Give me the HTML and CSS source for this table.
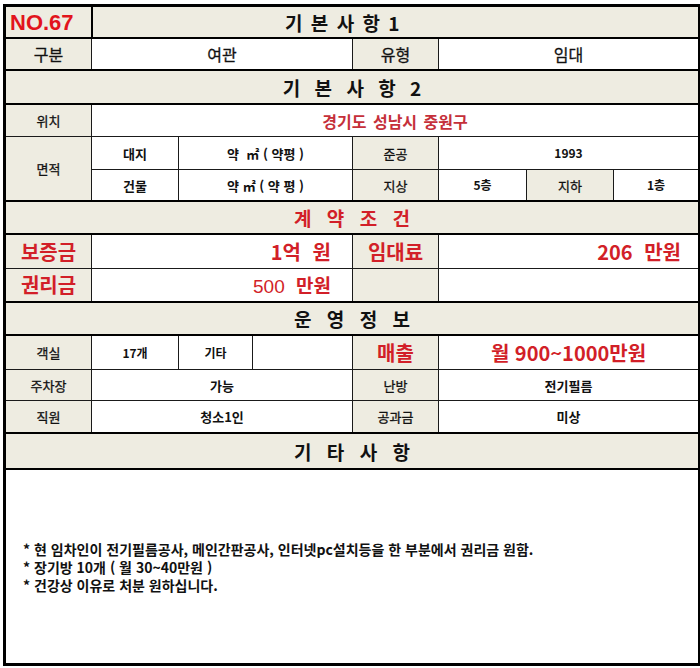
FILE: index.html
```html
<!DOCTYPE html>
<html lang="ko">
<head>
<meta charset="utf-8">
<title>NO.67</title>
<link rel="stylesheet" href="styles.css">
</head>
<body>
<table class="sheet">
  <colgroup>
    <col class="c1"><col class="c2"><col class="c3"><col class="c4">
    <col class="c5"><col class="c6"><col class="c7"><col class="c8">
  </colgroup>
  <tbody class="sec">
    <tr class="first">
      <td class="no">NO.67</td>
      <td colspan="7" class="head h1">기 본 사 항 1</td>
    </tr>
  </tbody>
  <tbody class="sec">
    <tr class="short">
      <td class="lab l16">구분</td>
      <td colspan="3" class="val v16">여관</td>
      <td class="lab l16">유형</td>
      <td colspan="3" class="val v16">임대</td>
    </tr>
  </tbody>
  <tbody class="sec">
    <tr class="tall"><td colspan="8" class="head h2">기 본 사 항 2</td></tr>
  </tbody>
  <tbody class="sec">
    <tr>
      <td class="lab">위치</td>
      <td colspan="7" class="val addr">경기도 성남시 중원구</td>
    </tr>
    <tr class="tall">
      <td rowspan="2" class="lab">면적</td>
      <td class="val b">대지</td>
      <td colspan="2" class="val b">약&nbsp; ㎡ ( 약평 )</td>
      <td class="lab">준공</td>
      <td colspan="3" class="val b sm">1993</td>
    </tr>
    <tr class="short">
      <td class="val b">건물</td>
      <td colspan="2" class="val b">약 ㎡ ( 약 평 )</td>
      <td class="lab">지상</td>
      <td class="val b sm">5층</td>
      <td class="lab">지하</td>
      <td class="val b sm">1층</td>
    </tr>
  </tbody>
  <tbody class="sec">
    <tr><td colspan="8" class="head h3 red">계 약 조 건</td></tr>
  </tbody>
  <tbody class="sec">
    <tr class="xtall">
      <td class="lab big red">보증금</td>
      <td colspan="3" class="val big red right">1억 원</td>
      <td class="lab big red">임대료</td>
      <td colspan="3" class="val big red right r2">206 만원</td>
    </tr>
    <tr class="tall">
      <td class="lab big red">권리금</td>
      <td colspan="3" class="val mid red right"><span class="arial">500</span> 만원</td>
      <td class="lab"></td>
      <td colspan="3" class="val"></td>
    </tr>
  </tbody>
  <tbody class="sec">
    <tr><td colspan="8" class="head h3">운 영 정 보</td></tr>
  </tbody>
  <tbody class="sec">
    <tr class="xtall">
      <td class="lab">객실</td>
      <td class="val b sm">17개</td>
      <td class="val b sm">기타</td>
      <td class="val"></td>
      <td class="lab big red">매출</td>
      <td colspan="3" class="val big red">월 900~1000만원</td>
    </tr>
    <tr class="short">
      <td class="lab">주차장</td>
      <td colspan="3" class="val b">가능</td>
      <td class="lab">난방</td>
      <td colspan="3" class="val b">전기필름</td>
    </tr>
    <tr>
      <td class="lab">직원</td>
      <td colspan="3" class="val b">청소1인</td>
      <td class="lab">공과금</td>
      <td colspan="3" class="val b">미상</td>
    </tr>
  </tbody>
  <tbody class="sec">
    <tr class="xxtall"><td colspan="8" class="head h3">기 타 사 항</td></tr>
  </tbody>
  <tbody class="sec">
    <tr>
      <td colspan="8" class="notes">
        <div class="note">* 현 임차인이 전기필름공사, 메인간판공사, 인터넷pc설치등을 한 부분에서 권리금 원함.</div>
        <div class="note">* 장기방 10개 ( 월 30~40만원 )</div>
        <div class="note">* 건강상 이유로 처분 원하십니다.</div>
      </td>
    </tr>
  </tbody>
</table>
</body>
</html>
```

FILE: styles.css
```css
html, body {
  margin: 0;
  padding: 0;
  background: #fff;
}

body {
  font-family: "Noto Sans CJK KR", "Liberation Sans", sans-serif;
  color: #111;
}

.sheet {
  border-collapse: collapse;
  table-layout: fixed;
  width: 695px;
  margin: 4px 0 0 3px;
  border: 3px solid #000;
}

.c1 { width: 87px; }
.c2 { width: 87px; }
.c3 { width: 74px; }
.c4 { width: 100px; }
.c5 { width: 86px; }
.c6 { width: 88px; }
.c7 { width: 87px; }
.c8 { width: 86px; }

.sec {
  border: 2px solid #000;
}

.sheet td {
  border: 1px solid #1a1a1a;
  padding: 0;
  height: 31px;
  text-align: center;
  vertical-align: middle;
  white-space: nowrap;
  overflow: hidden;
  font-size: 13px;
  line-height: 1;
  background: #fff;
  -webkit-text-stroke: 0.3px currentColor;
}

.sheet tr.first td { height: 29px; }
.sheet tr.tall td { height: 32px; }
.sheet tr.xtall td { height: 33px; }
.sheet tr.xxtall td { height: 34px; }
.sheet tr.short td { height: 30px; }

.sheet td.lab,
.sheet td.head,
.sheet td.no {
  background: #eeece1;
}

.sheet td.no {
  font-family: "Liberation Sans", sans-serif;
  font-weight: bold;
  font-size: 22px;
  color: #e2141c;
  text-align: left;
  padding-left: 4px;
  padding-top: 1px;
  border-right: 2px solid #000;
  -webkit-text-stroke: 0;
}

.sheet td.head {
  font-size: 19px;
  font-weight: bold;
  color: #111;
  -webkit-text-stroke: 0;
}

.sheet td.h1 {
  word-spacing: 3px;
  padding-right: 106px;
}

.sheet td.h2 { word-spacing: 9px; }
.sheet td.h3 { word-spacing: 10px; }

.sheet td.l16,
.sheet td.v16 {
  font-size: 16px;
}

.sheet td.b {
  font-weight: bold;
  -webkit-text-stroke: 0;
}

.sheet td.sm { font-size: 12px; }

.sheet td.addr {
  font-size: 16px;
  font-weight: bold;
  color: #c5303a;
  word-spacing: 2px;
  -webkit-text-stroke: 0;
}

.sheet td.red,
.sheet td.head.red {
  color: #d21f28;
}

.sheet td.big {
  font-size: 20px;
  font-weight: bold;
  -webkit-text-stroke: 0;
}

.sheet td.mid {
  font-size: 19px;
  font-weight: bold;
  -webkit-text-stroke: 0;
}

.arial {
  font-family: "Liberation Sans", sans-serif;
  font-weight: normal;
}

.sheet td.right {
  text-align: right;
  padding-right: 21px;
  word-spacing: 6px;
}

.sheet td.r2 { padding-right: 17px; }

.sheet td.notes {
  height: 193px;
  text-align: left;
  padding-left: 17px;
  font-size: 14px;
  font-weight: bold;
  -webkit-text-stroke: 0;
}

.note {
  line-height: 18px;
}
```
